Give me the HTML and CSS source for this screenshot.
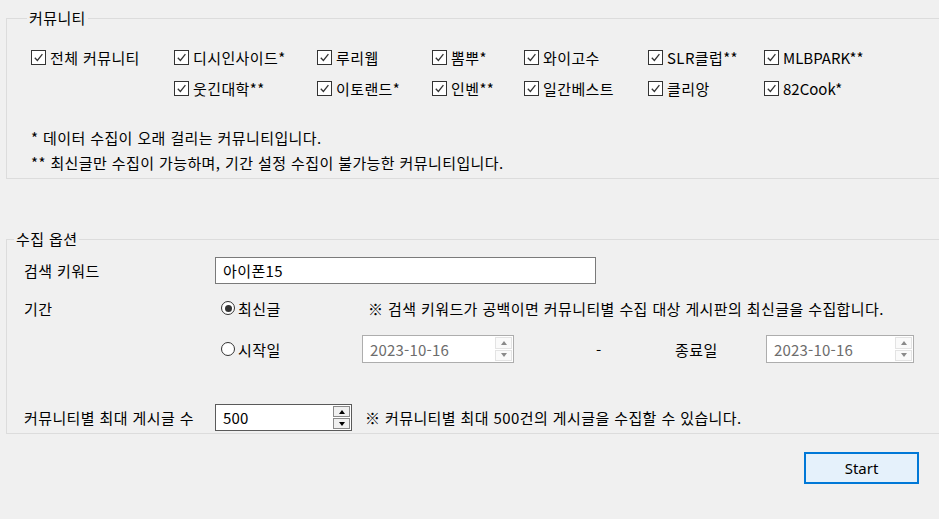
FILE: index.html
```html
<!DOCTYPE html>
<html lang="ko">
<head>
<meta charset="utf-8">
<link rel="stylesheet" href="styles.css">
</head>
<body>
<div class="win">
  <fieldset class="group g1">
    <legend>커뮤니티</legend>
    <div class="cbgrid">
      <label class="cb c1"><span class="box"><svg viewBox="0 0 14 14"><path d="M3 7.2 L5.8 10.2 L11.2 3.4"/></svg></span>전체 커뮤니티</label>
      <label class="cb"><span class="box"><svg viewBox="0 0 14 14"><path d="M3 7.2 L5.8 10.2 L11.2 3.4"/></svg></span>디시인사이드*</label>
      <label class="cb"><span class="box"><svg viewBox="0 0 14 14"><path d="M3 7.2 L5.8 10.2 L11.2 3.4"/></svg></span>루리웹</label>
      <label class="cb"><span class="box"><svg viewBox="0 0 14 14"><path d="M3 7.2 L5.8 10.2 L11.2 3.4"/></svg></span>뽐뿌*</label>
      <label class="cb"><span class="box"><svg viewBox="0 0 14 14"><path d="M3 7.2 L5.8 10.2 L11.2 3.4"/></svg></span>와이고수</label>
      <label class="cb"><span class="box"><svg viewBox="0 0 14 14"><path d="M3 7.2 L5.8 10.2 L11.2 3.4"/></svg></span>SLR클럽**</label>
      <label class="cb latin"><span class="box"><svg viewBox="0 0 14 14"><path d="M3 7.2 L5.8 10.2 L11.2 3.4"/></svg></span>MLBPARK**</label>
      <label class="cb c2"><span class="box"><svg viewBox="0 0 14 14"><path d="M3 7.2 L5.8 10.2 L11.2 3.4"/></svg></span>웃긴대학**</label>
      <label class="cb"><span class="box"><svg viewBox="0 0 14 14"><path d="M3 7.2 L5.8 10.2 L11.2 3.4"/></svg></span>이토랜드*</label>
      <label class="cb"><span class="box"><svg viewBox="0 0 14 14"><path d="M3 7.2 L5.8 10.2 L11.2 3.4"/></svg></span>인벤**</label>
      <label class="cb"><span class="box"><svg viewBox="0 0 14 14"><path d="M3 7.2 L5.8 10.2 L11.2 3.4"/></svg></span>일간베스트</label>
      <label class="cb"><span class="box"><svg viewBox="0 0 14 14"><path d="M3 7.2 L5.8 10.2 L11.2 3.4"/></svg></span>클리앙</label>
      <label class="cb latin"><span class="box"><svg viewBox="0 0 14 14"><path d="M3 7.2 L5.8 10.2 L11.2 3.4"/></svg></span>82Cook*</label>
    </div>
    <div class="notes">
      <p>* 데이터 수집이 오래 걸리는 커뮤니티입니다.</p>
      <p>** 최신글만 수집이 가능하며, 기간 설정 수집이 불가능한 커뮤니티입니다.</p>
    </div>
  </fieldset>

  <fieldset class="group g2">
    <legend>수집 옵션</legend>
    <div class="row r1">
      <span class="lbl">검색 키워드</span>
      <div class="textbox kw">아이폰15</div>
    </div>
    <div class="row r2">
      <span class="lbl">기간</span>
      <label class="radio"><span class="circle on"></span>최신글</label>
      <span class="hint h1">※ 검색 키워드가 공백이면 커뮤니티별 수집 대상 게시판의 최신글을 수집합니다.</span>
    </div>
    <div class="row r3">
      <span class="lbl"></span>
      <label class="radio"><span class="circle"></span>시작일</label>
      <div class="spin date d1 disabled">
        <span class="val">2023-10-16</span>
        <span class="btns"><span class="up"></span><span class="dn"></span></span>
      </div>
      <span class="dash">-</span>
      <span class="endlbl">종료일</span>
      <div class="spin date d2 disabled">
        <span class="val">2023-10-16</span>
        <span class="btns"><span class="up"></span><span class="dn"></span></span>
      </div>
    </div>
    <div class="row r4">
      <span class="lbl">커뮤니티별 최대 게시글 수</span>
      <div class="spin num">
        <span class="val">500</span>
        <span class="btns"><span class="up"></span><span class="dn"></span></span>
      </div>
      <span class="hint h2">※ 커뮤니티별 최대 500건의 게시글을 수집할 수 있습니다.</span>
    </div>
  </fieldset>

  <div class="actions">
    <button class="start" type="button">Start</button>
  </div>
</div>
</body>
</html>
```

FILE: styles.css
```css
* { box-sizing: border-box; }
html, body {
  margin: 0;
  padding: 0;
  width: 939px;
  height: 519px;
  overflow: hidden;
  background: #f0f0f0;
}
body {
  font-family: "Noto Sans CJK KR", "Noto Sans", sans-serif;
  font-size: 15px;
  letter-spacing: 0.4px;
  color: #000;
}
.win {
  display: flex;
  flex-direction: column;
  padding-top: 10px;
}
.group {
  margin: 0 0 0 6px;
  width: 960px;
  border: 1px solid #dcdcdc;
  padding: 0;
  min-width: 0;
}
.group legend {
  margin-left: -4px;
  padding: 0 2px;
  height: 16px;
  line-height: 16px;
}
.g1 { padding: 20px 0 3px 24px; }

.cbgrid {
  display: grid;
  grid-template-columns: 143px 143px 115px 92px 124px 116px 160px;
  grid-auto-rows: 22px;
  row-gap: 9px;
}
.cb {
  display: flex;
  align-items: center;
  gap: 4px;
  white-space: nowrap;
}
.cb.latin { letter-spacing: 0; }
.c2 { grid-column: 2; }
.box {
  width: 15px;
  height: 15px;
  border: 1px solid #333;
  background: #fff;
  display: inline-block;
  flex: none;
}
.box svg {
  display: block;
  width: 13px;
  height: 13px;
  fill: none;
  stroke: #333;
  stroke-width: 1.4;
}
.notes {
  margin-top: 26px;
}
.notes p {
  margin: 0;
  line-height: 25px;
  height: 25px;
}

.g2 {
  margin-top: 52px;
  padding: 10px 0 2px 17px;
}
.g2 legend { margin-left: -10px; }
.row {
  display: flex;
  align-items: center;
  white-space: nowrap;
}
.lbl {
  width: 191px;
  flex: none;
}
.r1 { height: 27px; }
.r2 { height: 22px; margin-top: 13px; }
.r3 { height: 28px; margin-top: 16px; }
.r4 { height: 27px; margin-top: 41px; }

.textbox {
  height: 27px;
  background: #fff;
  border: 1px solid #7a7a7a;
  display: flex;
  align-items: center;
  padding-left: 7px;
}
.kw { width: 381px; }

.radio {
  display: flex;
  align-items: center;
  gap: 3px;
  margin-left: 6px;
  width: 147px;
  flex: none;
}
.circle {
  width: 14px;
  height: 14px;
  border: 1px solid #333;
  border-radius: 50%;
  background: #fff;
  position: relative;
  flex: none;
}
.circle.on::after {
  content: "";
  position: absolute;
  left: 2.5px;
  top: 2.5px;
  width: 7px;
  height: 7px;
  border-radius: 50%;
  background: #333;
}

.spin {
  background: #fff;
  border: 1px solid #7a7a7a;
  display: flex;
  align-items: stretch;
  padding: 1px;
}
.spin .val {
  flex: 1;
  display: flex;
  align-items: center;
  padding-left: 6px;
  letter-spacing: 0.2px;
}
.btns {
  width: 17px;
  display: flex;
  flex-direction: column;
  gap: 1px;
  flex: none;
}
.btns span {
  flex: 1;
  background: #f0f0f0;
  border: 1px solid #d9d9d9;
  position: relative;
}
.btns span::after {
  content: "";
  position: absolute;
  left: 50%;
  top: 50%;
  margin-left: -3px;
  border-left: 3px solid transparent;
  border-right: 3px solid transparent;
}
.btns .up::after { margin-top: -2px; border-bottom: 4px solid #000; }
.btns .dn::after { margin-top: -2px; border-top: 4px solid #000; }

.date { height: 28px; }
.date.disabled { border-color: #adadad; }
.date.disabled .val { color: #6d6d6d; }
.date.disabled .btns span { background: #fafafa; border-color: #e3e3e3; }
.date.disabled .btns .up::after { border-bottom-color: #8a8a8a; }
.date.disabled .btns .dn::after { border-top-color: #8a8a8a; }
.d1 { width: 152px; margin-left: -6px; }
.dash { margin-left: 82px; width: 79px; flex: none; }
.endlbl { width: 91px; flex: none; }
.d2 { width: 148px; }

.num { width: 137px; height: 27px; border-color: #5a5a5a; }
.num .btns span { border-color: #8a8a8a; background: #f0f0f0; }
.hint.h2 { margin-left: 13px; }

.actions {
  display: flex;
  justify-content: flex-end;
  padding: 18px 20px 0 0;
}
.start {
  width: 115px;
  height: 32px;
  background: #e5f1fb;
  border: 2px solid #0078d7;
  font-family: "Noto Sans", "Noto Sans CJK KR", sans-serif;
  font-size: 15px;
  color: #000;
  padding: 0;
}
```
